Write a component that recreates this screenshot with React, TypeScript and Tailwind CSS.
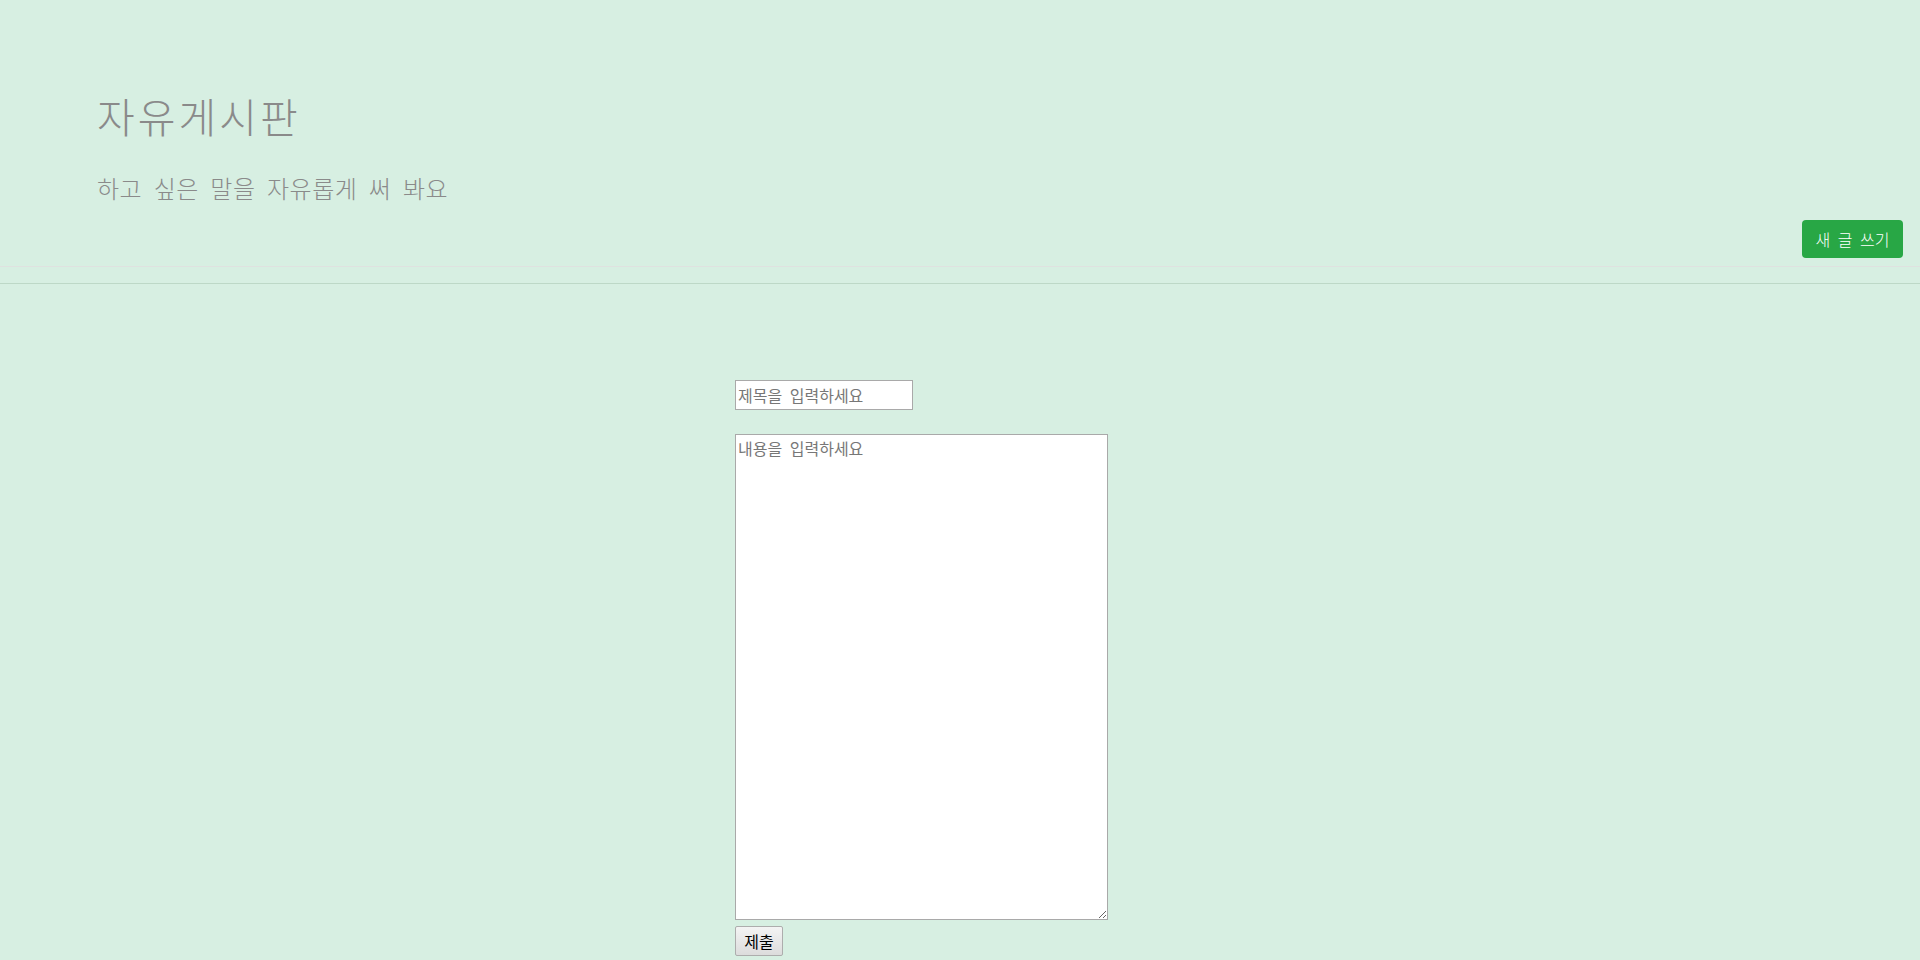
import React from 'react'

export default function App() {
  return (
    <div className="min-h-screen w-full bg-[#d7efe2] font-['Noto_Sans_CJK_KR',sans-serif]">
      <header className="flex h-[267px] flex-col border-b border-[#dfe2e0] pt-[95px]">
        <div className="px-[97px]">
          <h1 className="font-['Liberation_Serif','Noto_Sans_CJK_KR',serif] text-[41px] font-light leading-[48px] tracking-[3px] text-[#8a8a8a]">
            자유게시판
          </h1>
          <p className="mt-[33px] font-['Liberation_Serif','Noto_Sans_CJK_KR',serif] text-[24px] font-light leading-[29px] tracking-[0.5px] text-[#8a8a8a] [word-spacing:5px]">
            하고 싶은 말을 자유롭게 써 봐요
          </p>
        </div>
        <div className="mt-[15px] flex justify-end pr-[17px]">
          <button
            type="button"
            className="h-[38px] w-[101px] rounded-[4px] bg-[#28a745] text-[16px] font-light text-white [word-spacing:4px]"
          >
            새 글 쓰기
          </button>
        </div>
      </header>

      <div className="mt-[16px] border-t border-[#bdd8c7]" />

      <form className="flex flex-col items-start pl-[735px] pt-[96px]">
        <input
          type="text"
          placeholder="제목을 입력하세요"
          className="h-[30px] w-[178px] border border-[#a9a9a9] bg-white px-[2px] text-[16px] placeholder:text-[#777] placeholder:[word-spacing:4px]"
        />
        <textarea
          placeholder="내용을 입력하세요"
          className="mt-[24px] h-[486px] w-[373px] border border-[#a9a9a9] bg-white px-[2px] py-[1px] text-[16px] placeholder:text-[#777] placeholder:[word-spacing:4px]"
        />
        <button
          type="button"
          className="mt-[6px] h-[30px] w-[48px] rounded-[2px] border border-[#adadad] bg-gradient-to-b from-[#f4f4f4] to-[#dcdcdc] text-[16px] text-black"
        >
          제출
        </button>
      </form>
    </div>
  )
}
